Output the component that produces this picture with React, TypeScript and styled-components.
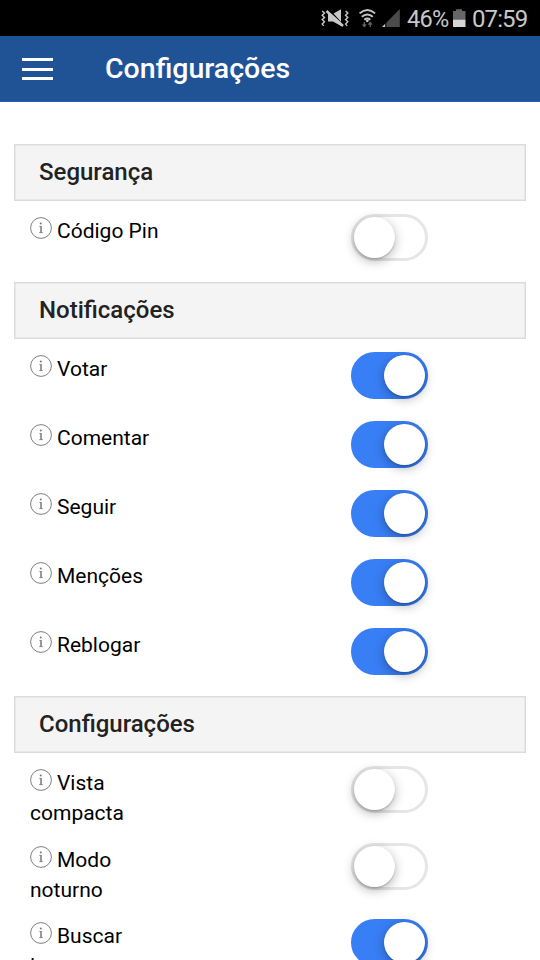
import React from 'react';
import styled, { createGlobalStyle } from 'styled-components';

const GlobalStyle = createGlobalStyle`
  * { box-sizing: border-box; }
  html, body { margin: 0; background: #fff; }
  body { font-family: Roboto, "Liberation Sans", sans-serif; color: #000; }
`;

const Screen = styled.div`
  width: 540px;
  height: 960px;
  display: flex;
  flex-direction: column;
  overflow: hidden;
  background: #fff;
`;

const StatusBar = styled.div`
  flex: none;
  height: 36px;
  padding: 2px 12px 0 0;
  display: flex;
  align-items: center;
  justify-content: flex-end;
  background: #000;
  color: #c8c8c8;
  line-height: 34px;
`;

const StatusIcons = styled.svg`
  display: block;
  width: 84px;
  height: 34px;
  margin-right: 3px;
`;

const Battery = styled.svg`
  display: block;
  width: 13px;
  height: 34px;
  margin: 0 6px 0 5px;
`;

const Percent = styled.span`
  width: 41px;
  font-size: 23.5px;
  letter-spacing: -0.7px;
  white-space: nowrap;
`;

const Clock = styled.span`
  width: 56px;
  font-size: 24px;
  letter-spacing: -0.9px;
  white-space: nowrap;
`;

const Header = styled.header`
  flex: none;
  height: 66px;
  padding-left: 22px;
  display: flex;
  align-items: center;
  background: #205396;
  border-bottom: 1px solid #2560bd;
  color: #fff;
`;

const MenuButton = styled.button`
  width: 31px;
  height: 22px;
  margin: 1px 52px 0 0;
  padding: 0;
  border: 0;
  background: none;
  display: flex;
  flex-direction: column;
  justify-content: space-between;
`;

const MenuLine = styled.span`
  width: 31px;
  height: 3px;
  background: #fff;
`;

const Title = styled.h1`
  margin: 0;
  font-size: 28.5px;
  font-weight: 500;
  line-height: 64px;
`;

const Content = styled.main`
  flex: 1;
  min-height: 0;
  overflow: hidden;
  padding: 42px 14px 0;
`;

const Section = styled.section`
  margin-bottom: 12px;
`;

const SectionTitle = styled.h2`
  margin: 0;
  height: 57px;
  padding: 0 24px;
  border: 1px solid #dcdcdc;
  box-shadow: inset 0 0 0 0.5px #dcdcdc;
  background: #f4f4f4;
  color: #222;
  font-size: 24px;
  font-weight: 500;
  line-height: 55px;
`;

const Row = styled.div<{ $tall?: boolean }>`
  height: ${p => (p.$tall ? 76.5 : 69)}px;
  padding: 13px 0 0 16px;
  display: grid;
  grid-template-columns: 160px 77px;
  column-gap: 161px;
  align-items: start;
`;

const Label = styled.div`
  margin-top: 2px;
  font-size: 21px;
  line-height: 30px;
`;

const LabelLine = styled.div`
  display: flex;
  white-space: nowrap;
`;

const InfoIcon = styled.svg`
  flex: none;
  display: block;
  width: 22px;
  height: 22px;
  margin: 1.4px 5px 0 0;
`;

const Track = styled.button<{ $on: boolean }>`
  width: 77px;
  height: 47px;
  padding: 0;
  display: flex;
  align-items: center;
  justify-content: ${p => (p.$on ? 'flex-end' : 'flex-start')};
  border: 3px solid ${p => (p.$on ? '#387ef5' : '#e6e6e6')};
  border-radius: 24px;
  background: ${p => (p.$on ? '#387ef5' : '#fff')};
`;

const Knob = styled.span`
  width: 41px;
  height: 41px;
  border-radius: 50%;
  background: #fff;
  box-shadow: 0 3px 10.5px rgba(0, 0, 0, 0.3), 0 1.5px 1.5px rgba(0, 0, 0, 0.15);
`;

type Setting = { lines: string[]; on: boolean };
type Group = { title: string; items: Setting[] };

const groups: Group[] = [
  { title: 'Segurança', items: [{ lines: ['Código Pin'], on: false }] },
  {
    title: 'Notificações',
    items: ['Votar', 'Comentar', 'Seguir', 'Menções', 'Reblogar'].map(name => ({ lines: [name], on: true })),
  },
  {
    title: 'Configurações',
    items: [
      { lines: ['Vista', 'compacta'], on: false },
      { lines: ['Modo', 'noturno'], on: false },
      { lines: ['Buscar', 'imagens'], on: true },
    ],
  },
];

function Info() {
  return (
    <InfoIcon viewBox="0 0 22 22" aria-hidden="true">
      <circle cx="11" cy="11" r="10.4" fill="none" stroke="#808080" strokeWidth="1" />
      <circle cx="10.8" cy="6.5" r="1" fill="#777" />
      <path d="M9.3 9.4h1.5M9.2 15.6h3.6" fill="none" stroke="#888" strokeWidth="0.9" />
      <path d="M11 9v6.8" stroke="#777" strokeWidth="1.5" />
    </InfoIcon>
  );
}

function Toggle({ on }: { on: boolean }) {
  return (
    <Track type="button" role="switch" aria-checked={on} $on={on}>
      <Knob />
    </Track>
  );
}

function Status() {
  return (
    <StatusBar>
      <StatusIcons viewBox="320 2 84 34" aria-hidden="true">
        <g fill="none" stroke="#c8c8c8" strokeWidth="1.4">
          <path d="M322.2 11l2.3 2-2.3 2.2 2.3 2.2-2.3 2.2 2.3 2.2-2.3 2.3 1.6 1.8" />
          <path d="M345.6 11l2.2 2-2.2 2.2 2.2 2.2-2.2 2.2 2.2 2.2-2.2 2.3 1.6 1.8" />
        </g>
        <path d="M333.5 13.5l7.5-4.2v12.5zM328 14h3.5l9.5 8.5v3.6l-8-4.6h-5z" fill="#c8c8c8" />
        <path d="M326.5 11l16.5 15" stroke="#c8c8c8" strokeWidth="2.4" />
        <g fill="none" stroke="#c8c8c8" strokeWidth="1.9">
          <path d="M359.5 13.4q8-6.8 15.6 0" />
          <path d="M361.8 16.8q5.6-4.8 11 0" />
          <path d="M364.3 19.7q3-2.4 6 0" />
        </g>
        <circle cx="367.3" cy="20.8" r="1.4" fill="#c8c8c8" />
        <path d="M364.3 22v4.5M362.6 24.3l1.7 2.1 1.8-2.1M370.2 27v-4.5M368.5 24.7l1.7-2.1 1.8 2.1" fill="none" stroke="#666" strokeWidth="1.3" />
        <path d="M386.3 22.8L399.8 9v18h-13.5z" fill="#4a4a4a" />
        <path d="M382 27l3.2-3.2V27z" fill="#c8c8c8" />
      </StatusIcons>
      <Percent>46%</Percent>
      <Battery viewBox="453 2 13 34" aria-hidden="true">
        <path d="M453 11h3V9.2h6V11h3.5v8.5H453z" fill="#666" />
        <path d="M453 19.5h12.5V27H453z" fill="#d5d5d5" />
      </Battery>
      <Clock>07:59</Clock>
    </StatusBar>
  );
}

export default function App() {
  return (
    <Screen>
      <GlobalStyle />
      <Status />
      <Header>
        <MenuButton aria-label="Menu">
          <MenuLine />
          <MenuLine />
          <MenuLine />
        </MenuButton>
        <Title>Configurações</Title>
      </Header>
      <Content>
        {groups.map(group => (
          <Section key={group.title}>
            <SectionTitle>{group.title}</SectionTitle>
            {group.items.map(item => (
              <Row key={item.lines[0]} $tall={item.lines.length > 1}>
                <Label>
                  <LabelLine>
                    <Info />
                    {item.lines[0]}
                  </LabelLine>
                  {item.lines[1] && <LabelLine>{item.lines[1]}</LabelLine>}
                </Label>
                <Toggle on={item.on} />
              </Row>
            ))}
          </Section>
        ))}
      </Content>
    </Screen>
  );
}
